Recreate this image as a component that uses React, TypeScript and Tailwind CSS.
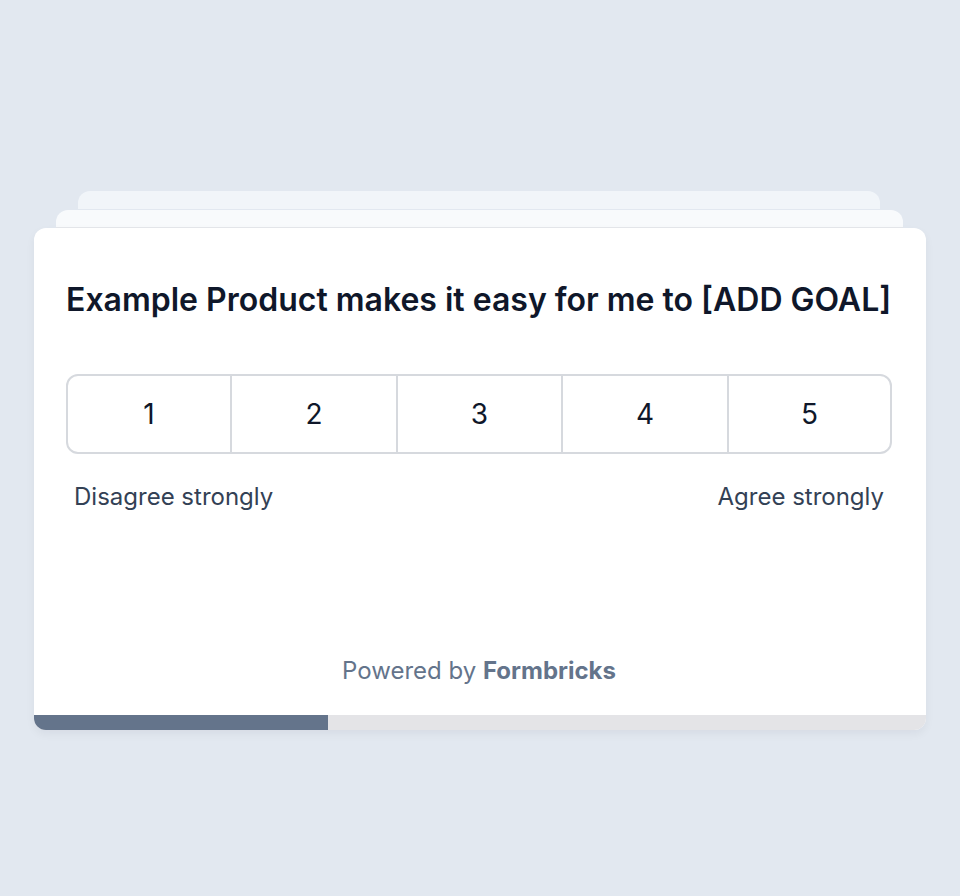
export default function App() {
  const options = [1, 2, 3, 4, 5];
  return (
    <div
      className="min-h-[896px] w-full bg-[#e2e8f0] pt-[191px]"
      style={{ fontFamily: "Inter, 'Noto Sans', sans-serif" }}
    >
      <div className="ml-[34px] w-[892px]">
        {/* stacked cards behind */}
        <div className="ml-[44px] mr-[46px] h-[19px] rounded-t-xl border-b border-[#e2e8f0] bg-[#f1f5f9]" />
        <div className="ml-[22px] mr-[23px] h-[18px] rounded-t-xl border-b border-[#e5e7eb] bg-[#f8fafc]" />

        <div className="overflow-hidden rounded-xl bg-white shadow-[0_4px_10px_rgba(15,23,42,0.05)]">
          <div className="pl-[32px] pr-[34px] pt-[52px] pb-[28px]">
            <h1 className="whitespace-nowrap text-[32px] font-semibold leading-[40px] text-[#0f172a]">
              Example Product makes it easy for me to [ADD GOAL]
            </h1>

            <div className="mt-[54px] grid h-[80px] grid-cols-[164px_166px_165px_166px_1fr] divide-x-2 divide-[#d6d9de] overflow-hidden rounded-xl border-2 border-[#d6d9de]">
              {options.map((n) => (
                <div
                  key={n}
                  className="flex items-center justify-center text-[28px] text-[#0f172a]"
                >
                  {n}
                </div>
              ))}
            </div>

            <div className="mt-[27px] flex justify-between px-[8px] text-[24px] leading-[32px] text-[#334155]">
              <span>Disagree strongly</span>
              <span>Agree strongly</span>
            </div>

            <p className="mt-[142px] text-center text-[24px] leading-[32px] text-[#64748b]">
              Powered by <span className="font-bold">Formbricks</span>
            </p>
          </div>

          <div className="h-[15px] bg-[#e4e4e7]">
            <div className="h-full w-[33%] bg-[#64748b]" />
          </div>
        </div>
      </div>
    </div>
  );
}
